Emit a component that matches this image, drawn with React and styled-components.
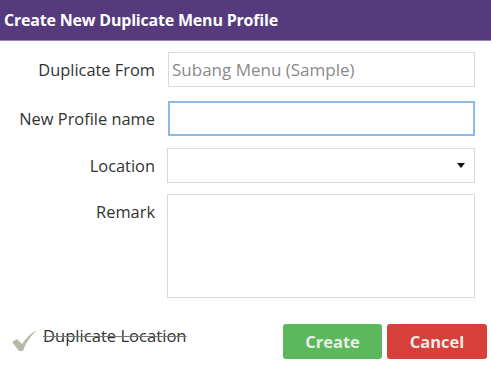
import React from 'react'
import styled, { createGlobalStyle } from 'styled-components'

const GlobalStyle = createGlobalStyle`
  body {
    margin: 0;
    background: #ffffff;
    font-family: "Open Sans", "Noto Sans", sans-serif;
  }
`

const Dialog = styled.div`
  width: 491px;
  height: 367px;
  background: #fff;
  overflow: hidden;
`

const Header = styled.div`
  height: 40px;
  padding-left: 4px;
  display: flex;
  align-items: center;
  background: #553b7d;
  border-bottom: 1px solid #9a86b6;
  color: #ffffff;
  font-size: 16px;
  font-weight: 700;
  letter-spacing: -0.2px;
`

const Form = styled.div`
  padding-top: 11px;
`

const Row = styled.div`
  display: grid;
  grid-template-columns: 155px 308px;
  column-gap: 12px;
  align-items: ${(p) => (p.top ? 'start' : 'center')};
  margin-bottom: ${(p) => p.gap || 0}px;
`

const Label = styled.label`
  justify-self: end;
  padding-top: ${(p) => (p.top ? '6px' : '0')};
  font-size: 16.4px;
  color: #333;
  white-space: nowrap;
`

const Field = styled.div`
  margin-left: ${(p) => p.shift || 0}px;
  height: ${(p) => p.h || 35}px;
  box-sizing: border-box;
  border: ${(p) => (p.focus ? '2px solid #8db8ea' : '1px solid #d9d9d9')};
  background: #fff;
  display: flex;
  align-items: center;
  padding: 0 9px 0 3px;
  font-size: 17px;
  color: #8a8a8a;
`

const Caret = styled.span`
  margin-left: auto;
  width: 0;
  height: 0;
  border-left: 4px solid transparent;
  border-right: 4px solid transparent;
  border-top: 5px solid #111;
`

const Footer = styled.div`
  display: flex;
  align-items: center;
  padding: 26px 0 0 12px;
`

const CheckRow = styled.div`
  display: flex;
  align-items: center;
  gap: 5px;
  margin-top: -4px;
  font-size: 16.6px;
  color: #333;
`

const Struck = styled.span`
  margin-top: -8px;
  text-decoration: line-through;
  text-decoration-color: #777;
  text-decoration-thickness: 1px;
`

const Buttons = styled.div`
  margin-left: auto;
  margin-right: 4px;
  display: flex;
  gap: 5px;
`

const Button = styled.button`
  width: ${(p) => p.w}px;
  height: 35px;
  border: none;
  border-radius: 3px;
  background: ${(p) => p.bg};
  color: #e9ece9;
  font-family: "Open Sans", "Noto Sans", sans-serif;
  font-size: 16.5px;
  font-weight: 700;
  cursor: pointer;
`

const Check = () => (
  <svg width="26" height="22" viewBox="0 0 26 22">
    <path
      d="M0 13 L5 10 L10 15 C14 9 19 4 25 1 C19 7 14 13 11 22 L7 22 Z"
      fill="#b4bda4"
    />
  </svg>
)

export default function App() {
  return (
    <>
      <GlobalStyle />
      <Dialog>
        <Header>Create New Duplicate Menu Profile</Header>
        <Form>
          <Row gap={14}>
            <Label>Duplicate From</Label>
            <Field shift={1}>Subang Menu (Sample)</Field>
          </Row>
          <Row gap={12}>
            <Label>New Profile name</Label>
            <Field shift={1} focus />
          </Row>
          <Row gap={11}>
            <Label>Location</Label>
            <Field>
              <Caret />
            </Field>
          </Row>
          <Row top>
            <Label top>Remark</Label>
            <Field h={104} />
          </Row>
        </Form>
        <Footer>
          <CheckRow>
            <Check />
            <Struck>Duplicate Location</Struck>
          </CheckRow>
          <Buttons>
            <Button w={99} bg="#5cb85c">Create</Button>
            <Button w={100} bg="#d83f3a">Cancel</Button>
          </Buttons>
        </Footer>
      </Dialog>
    </>
  )
}
